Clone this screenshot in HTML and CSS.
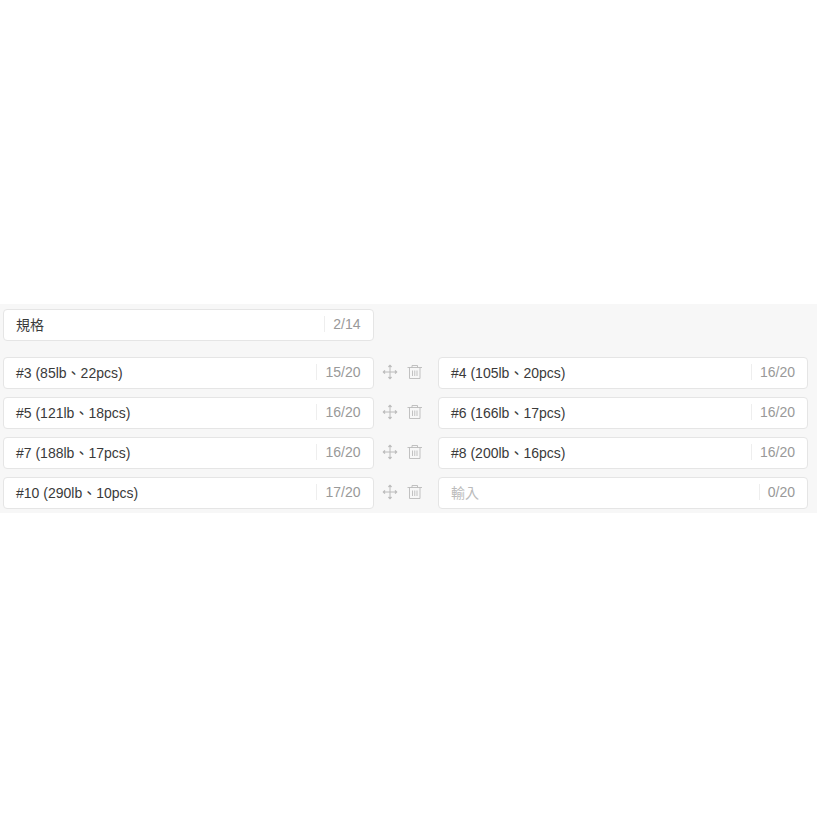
FILE: index.html
```html
<!DOCTYPE html>
<html lang="zh-Hant">
<head>
<meta charset="utf-8">
<title>規格</title>
<link rel="stylesheet" href="styles.css">
</head>
<body>
<section class="panel">
  <div class="head-row">
    <div class="field"><span class="value">規格</span><span class="count">2/14</span></div>
  </div>
  <div class="options">
    <div class="field"><span class="value">#3 (85lb、22pcs)</span><span class="count">15/20</span></div>
    <div class="actions">
      <svg class="icon" viewBox="0 0 16 16"><use href="#move"/></svg>
      <svg class="icon" viewBox="0 0 16 16"><use href="#trash"/></svg>
    </div>
    <div class="field"><span class="value">#4 (105lb、20pcs)</span><span class="count">16/20</span></div>

    <div class="field"><span class="value">#5 (121lb、18pcs)</span><span class="count">16/20</span></div>
    <div class="actions">
      <svg class="icon" viewBox="0 0 16 16"><use href="#move"/></svg>
      <svg class="icon" viewBox="0 0 16 16"><use href="#trash"/></svg>
    </div>
    <div class="field"><span class="value">#6 (166lb、17pcs)</span><span class="count">16/20</span></div>

    <div class="field"><span class="value">#7 (188lb、17pcs)</span><span class="count">16/20</span></div>
    <div class="actions">
      <svg class="icon" viewBox="0 0 16 16"><use href="#move"/></svg>
      <svg class="icon" viewBox="0 0 16 16"><use href="#trash"/></svg>
    </div>
    <div class="field"><span class="value">#8 (200lb、16pcs)</span><span class="count">16/20</span></div>

    <div class="field"><span class="value">#10 (290lb、10pcs)</span><span class="count">17/20</span></div>
    <div class="actions">
      <svg class="icon" viewBox="0 0 16 16"><use href="#move"/></svg>
      <svg class="icon" viewBox="0 0 16 16"><use href="#trash"/></svg>
    </div>
    <div class="field"><span class="value placeholder">輸入</span><span class="count short">0/20</span></div>
  </div>
</section>
<svg class="defs" width="0" height="0" aria-hidden="true">
  <defs>
    <g id="move" fill="none" stroke="currentColor">
      <path d="M8 2v12M2 8h12"/>
      <path d="M6.500 3 8 1.500 9.500 3M6.500 13 8 14.500 9.500 13M3 6.500 1.500 8 3 9.500M13 6.500 14.500 8 13 9.500" stroke-width="1.400"/>
    </g>
    <g id="trash" fill="none" stroke="currentColor" stroke-width="0.900">
      <path d="M0.500 3.500h14.500M5 3.500v-2h5.500v2M2.500 3.500v11h10.500v-11M5.500 6.500v5.500M7.750 6.500v5.500M10 6.500v5.500"/>
    </g>
  </defs>
</svg>
</body>
</html>
```
FILE: styles.css
```css
* { box-sizing: border-box; }
html, body { margin: 0; background: #fff; }
body {
  padding-top: 304px;
  font-family: "Liberation Sans", "Noto Sans CJK TC", sans-serif;
  font-size: 14px;
}
.panel {
  background: #f7f7f7;
  padding: 5px 9px 4px 3px;
  height: 209px;
}
.head-row { width: 370.5px; margin-bottom: 16px; }
.options {
  display: grid;
  grid-template-columns: 370.5px 1fr 370px;
  row-gap: 8px;
}
.field {
  height: 32px;
  display: flex;
  align-items: center;
  background: #fff;
  border: 1px solid #e5e5e5;
  border-radius: 4px;
  padding: 0 12px;
}
.value { flex: 1; color: #3a3a3a; line-height: 30px; white-space: nowrap; }
.placeholder { color: #bbb; }
.count {
  color: #999;
  border-left: 1px solid #eee;
  line-height: 16px;
  padding-left: 8px;
  margin-top: -2px;
}
.actions {
  display: flex;
  align-items: center;
  padding-left: 8.500px;
  gap: 9px;
  color: #bababa;
}
.icon { width: 16px; height: 16px; display: block; margin-top: -2px; }
.defs { position: absolute; }
```
